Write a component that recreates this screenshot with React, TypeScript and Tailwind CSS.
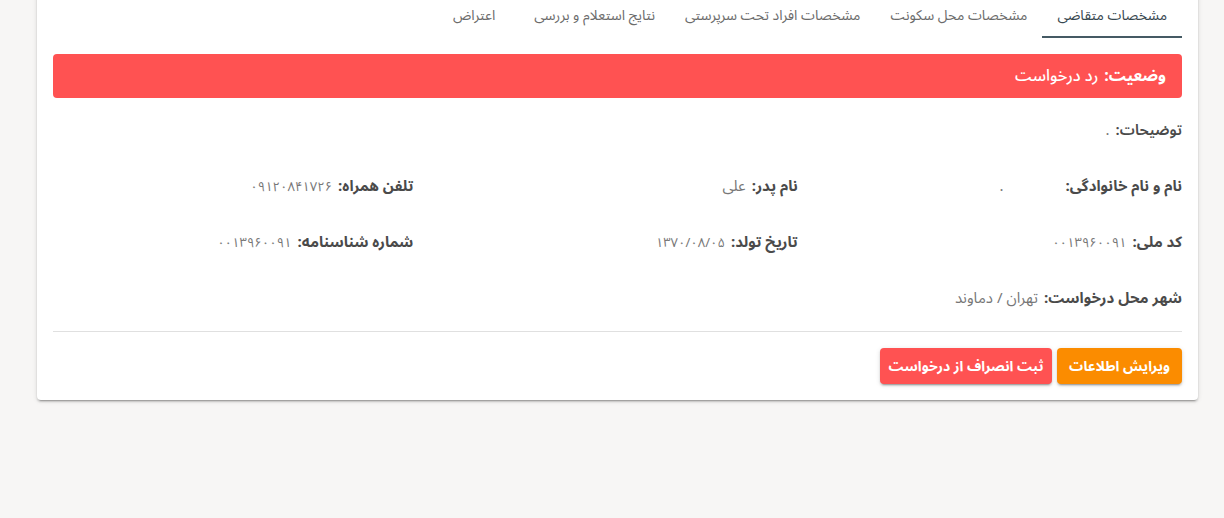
import React from "react";

const tabs = [
  "مشخصات متقاضی",
  "مشخصات محل سکونت",
  "مشخصات افراد تحت سرپرستی",
  "نتایج استعلام و بررسی",
  "اعتراض",
];

function Field({ label, value }: { label: string; value: React.ReactNode }) {
  return (
    <div className="flex items-center gap-1.5 whitespace-nowrap">
      <span className="font-bold text-[#4a4a4a]">{label}</span>
      <span className="text-[#777]">{value}</span>
    </div>
  );
}

function Num({ children }: { children: string }) {
  return <span className="text-[13px] tracking-[-0.5px]">{children}</span>;
}

export default function App() {
  return (
    <div
      dir="rtl"
      className="min-h-[518px] bg-[#f7f6f5] pt-px text-[15px]"
      style={{ fontFamily: '"Noto Sans Arabic", "DejaVu Sans", sans-serif' }}
    >
      <div className="-mt-[11px] mr-[26px] ml-[37px] rounded bg-white px-4 pb-4 shadow-[0_3px_1px_-2px_rgba(0,0,0,0.2),0_2px_2px_0_rgba(0,0,0,0.14),0_1px_5px_0_rgba(0,0,0,0.12)]">
        {/* tabs */}
        <div className="flex h-12">
          {tabs.map((t, i) => (
            <div
              key={i}
              className={
                i === 0
                  ? "flex min-w-[90px] items-center justify-center border-b-2 border-[#455a64] px-[15px] pt-[4px] text-[14px] text-[#37474f]"
                  : "flex min-w-[90px] items-center justify-center border-b-2 border-transparent px-[15px] pt-[4px] text-[14px] text-[#6b6b6b]"
              }
            >
              {t}
            </div>
          ))}
        </div>

        {/* status */}
        <div className="mt-4 flex h-[44px] items-center rounded bg-[#ff5252] px-4 text-[16px] text-white">
          <span className="font-bold">وضعیت:</span>
          <span className="mr-1.5 font-medium">رد درخواست</span>
        </div>

        {/* info */}
        <div className="mt-1">
          <div className="flex h-14 items-center">
            <span className="font-semibold text-[#4a4a4a]">توضیحات:</span>
            <span className="mr-1.5 text-[#777]">.</span>
          </div>
          <div className="grid h-14 grid-cols-3 items-center gap-x-6">
            <Field label="نام و نام خانوادگی:" value={<span className="mr-14">.</span>} />
            <Field label="نام پدر:" value="علی" />
            <Field label="تلفن همراه:" value={<Num>۰۹۱۲۰۸۴۱۷۲۶</Num>} />
          </div>
          <div className="grid h-14 grid-cols-3 items-center gap-x-6">
            <Field label="کد ملی:" value={<Num>۰۰۱۳۹۶۰۰۹۱</Num>} />
            <Field label="تاریخ تولد:" value={<Num>۱۳۷۰/۰۸/۰۵</Num>} />
            <Field label="شماره شناسنامه:" value={<Num>۰۰۱۳۹۶۰۰۹۱</Num>} />
          </div>
          <div className="flex h-14 items-center">
            <Field label="شهر محل درخواست:" value="تهران / دماوند" />
          </div>
        </div>

        <div className="mt-[5px] h-px bg-[#e0e0e0]" />

        {/* actions */}
        <div className="mt-4 flex gap-[5px]">
          <button className="h-9 w-[125px] rounded bg-[#fb8c00] text-[14px] font-bold text-white shadow-[0_3px_1px_-2px_rgba(0,0,0,0.2),0_2px_2px_0_rgba(0,0,0,0.14),0_1px_5px_0_rgba(0,0,0,0.12)]">
            ویرایش اطلاعات
          </button>
          <button className="h-9 w-[172px] rounded bg-[#ff5252] text-[14px] font-bold text-white shadow-[0_3px_1px_-2px_rgba(0,0,0,0.2),0_2px_2px_0_rgba(0,0,0,0.14),0_1px_5px_0_rgba(0,0,0,0.12)]">
            ثبت انصراف از درخواست
          </button>
        </div>
      </div>
    </div>
  );
}
